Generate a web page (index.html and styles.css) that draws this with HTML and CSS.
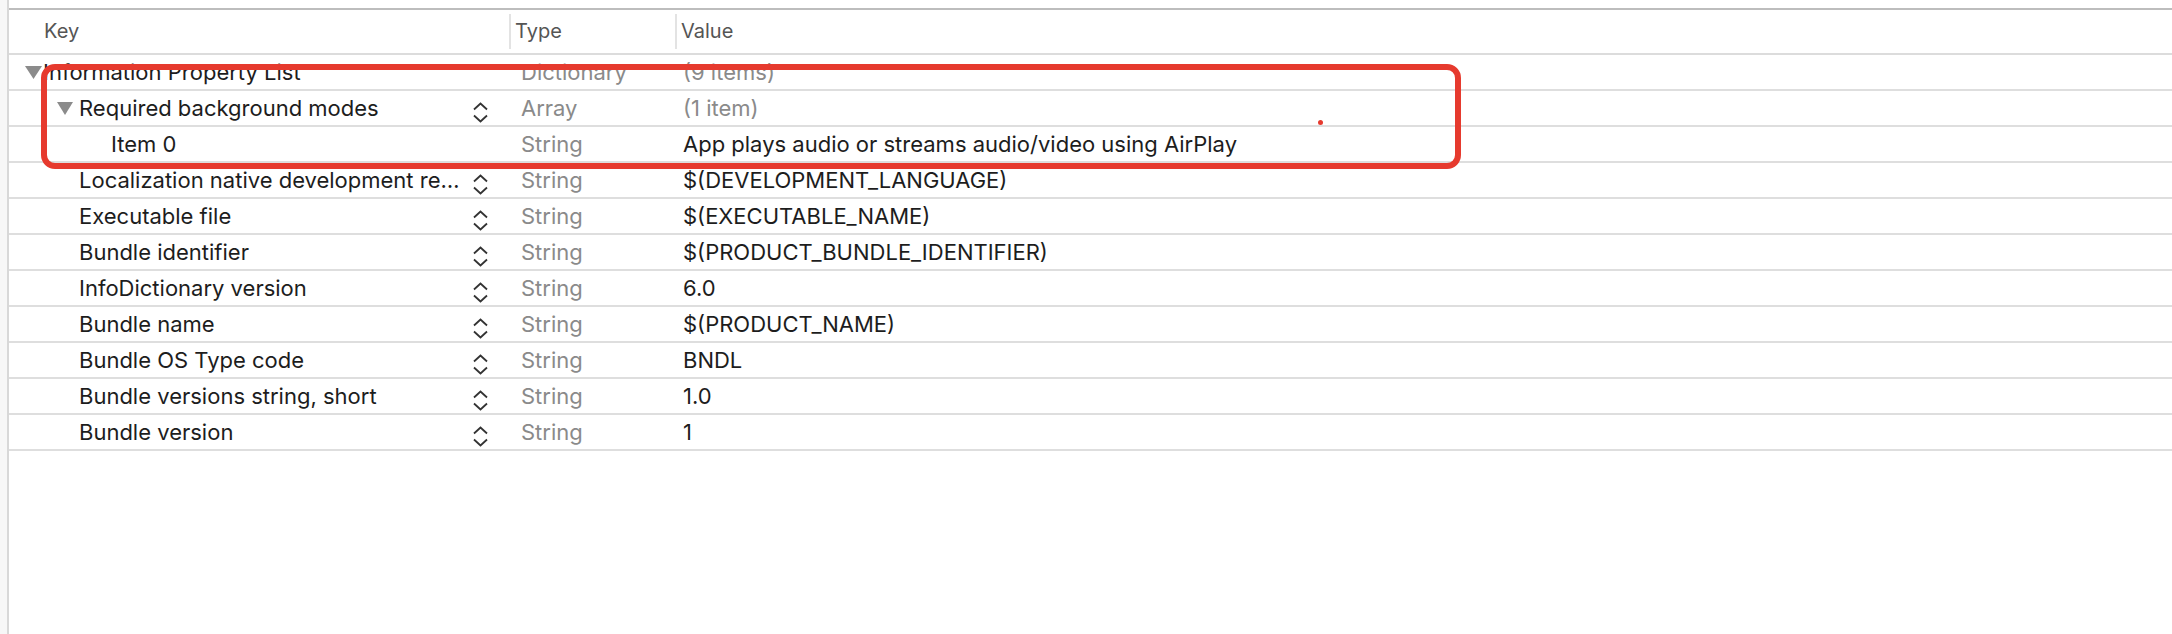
FILE: index.html
```html
<!DOCTYPE html>
<html lang="en">
<head>
<meta charset="utf-8">
<title>Info.plist</title>
<link rel="stylesheet" href="styles.css">
</head>
<body>
<div class="page">
  <div class="gutter"></div>
  <div class="main">
    <div class="header">
      <div class="hcell hkey">Key</div>
      <div class="hcell hdiv">Type</div>
      <div class="hcell hdiv">Value</div>
    </div>

    <div class="row">
      <div class="key lvl0">
        <svg class="tri" width="17" height="13" viewBox="0 0 17 13"><polygon points="0,0 17,0 8.5,13"/></svg>
        <span class="ktext">Information Property List</span>
      </div>
      <div class="type">Dictionary</div>
      <div class="value dim">(9 items)</div>
    </div>

    <div class="row">
      <div class="key lvl1">
        <svg class="tri" width="16" height="13" viewBox="0 0 16 13"><polygon points="0,0 16,0 8,13"/></svg>
        <span class="ktext">Required background modes</span>
        <svg class="step" width="15" height="21" viewBox="0 0 15 21"><path d="M1 7.5 L7.5 1.5 L14 7.5 M1 13.5 L7.5 19.5 L14 13.5"/></svg>
      </div>
      <div class="type">Array</div>
      <div class="value dim">(1 item)</div>
    </div>

    <div class="row">
      <div class="key lvl2">
        <span class="ktext">Item 0</span>
      </div>
      <div class="type">String</div>
      <div class="value">App plays audio or streams audio/video using AirPlay</div>
    </div>

    <div class="row">
      <div class="key lvl1n">
        <span class="ktext">Localization native development re…</span>
        <svg class="step" width="15" height="21" viewBox="0 0 15 21"><path d="M1 7.5 L7.5 1.5 L14 7.5 M1 13.5 L7.5 19.5 L14 13.5"/></svg>
      </div>
      <div class="type">String</div>
      <div class="value">$(DEVELOPMENT_LANGUAGE)</div>
    </div>

    <div class="row">
      <div class="key lvl1n">
        <span class="ktext">Executable file</span>
        <svg class="step" width="15" height="21" viewBox="0 0 15 21"><path d="M1 7.5 L7.5 1.5 L14 7.5 M1 13.5 L7.5 19.5 L14 13.5"/></svg>
      </div>
      <div class="type">String</div>
      <div class="value">$(EXECUTABLE_NAME)</div>
    </div>

    <div class="row">
      <div class="key lvl1n">
        <span class="ktext">Bundle identifier</span>
        <svg class="step" width="15" height="21" viewBox="0 0 15 21"><path d="M1 7.5 L7.5 1.5 L14 7.5 M1 13.5 L7.5 19.5 L14 13.5"/></svg>
      </div>
      <div class="type">String</div>
      <div class="value">$(PRODUCT_BUNDLE_IDENTIFIER)</div>
    </div>

    <div class="row">
      <div class="key lvl1n">
        <span class="ktext">InfoDictionary version</span>
        <svg class="step" width="15" height="21" viewBox="0 0 15 21"><path d="M1 7.5 L7.5 1.5 L14 7.5 M1 13.5 L7.5 19.5 L14 13.5"/></svg>
      </div>
      <div class="type">String</div>
      <div class="value">6.0</div>
    </div>

    <div class="row">
      <div class="key lvl1n">
        <span class="ktext">Bundle name</span>
        <svg class="step" width="15" height="21" viewBox="0 0 15 21"><path d="M1 7.5 L7.5 1.5 L14 7.5 M1 13.5 L7.5 19.5 L14 13.5"/></svg>
      </div>
      <div class="type">String</div>
      <div class="value">$(PRODUCT_NAME)</div>
    </div>

    <div class="row">
      <div class="key lvl1n">
        <span class="ktext">Bundle OS Type code</span>
        <svg class="step" width="15" height="21" viewBox="0 0 15 21"><path d="M1 7.5 L7.5 1.5 L14 7.5 M1 13.5 L7.5 19.5 L14 13.5"/></svg>
      </div>
      <div class="type">String</div>
      <div class="value">BNDL</div>
    </div>

    <div class="row">
      <div class="key lvl1n">
        <span class="ktext">Bundle versions string, short</span>
        <svg class="step" width="15" height="21" viewBox="0 0 15 21"><path d="M1 7.5 L7.5 1.5 L14 7.5 M1 13.5 L7.5 19.5 L14 13.5"/></svg>
      </div>
      <div class="type">String</div>
      <div class="value">1.0</div>
    </div>

    <div class="row">
      <div class="key lvl1n">
        <span class="ktext">Bundle version</span>
        <svg class="step" width="15" height="21" viewBox="0 0 15 21"><path d="M1 7.5 L7.5 1.5 L14 7.5 M1 13.5 L7.5 19.5 L14 13.5"/></svg>
      </div>
      <div class="type">String</div>
      <div class="value">1</div>
    </div>
  </div>

  <div class="highlight"></div>
  <div class="dot"></div>
</div>
</body>
</html>
```

FILE: styles.css
```css
* { box-sizing: border-box; }

html, body {
  margin: 0;
  padding: 0;
  background: #ffffff;
}

body {
  font-family: Inter, "Liberation Sans", sans-serif;
  color: #1d1d1d;
}

.page {
  position: relative;
  display: flex;
  width: 2172px;
  height: 634px;
  overflow: hidden;
  background: #ffffff;
}

.gutter {
  width: 7px;
  flex: none;
  background: #f7f7f7;
}

.main {
  flex: 1;
  border-left: 2px solid #d8d8d8;
  padding-top: 8px;
}

.header {
  display: grid;
  grid-template-columns: 500px 166px 1fr;
  height: 47px;
  border-top: 2px solid #bdbdbd;
  border-bottom: 2px solid #dcdcdc;
}

.hcell {
  display: flex;
  align-items: center;
  font-size: 20px;
  color: #555555;
  padding-bottom: 1px;
}

.hkey {
  padding-left: 35px;
}

.hdiv::before {
  content: "";
  width: 2px;
  height: 35px;
  margin-right: 4px;
  background: #e3e3e3;
}

.row {
  display: grid;
  grid-template-columns: 500px 166px 1fr;
  height: 36px;
  border-bottom: 2px solid #dedede;
  font-size: 22px;
}

.key {
  display: flex;
  align-items: center;
  white-space: nowrap;
  padding-right: 21px;
}

.lvl0 { padding-left: 16px; }
.lvl0 .tri { margin-right: 1px; }
.lvl1 { padding-left: 48px; }
.lvl1 .tri { margin-right: 6px; }
.lvl1n { padding-left: 70px; }
.lvl2 { padding-left: 102px; }

.tri {
  flex: none;
  fill: #8b8b8b;
}

.ktext {
  color: #1d1d1d;
}

.step {
  flex: none;
  margin-left: auto;
  margin-top: 8px;
  fill: none;
  stroke: #333333;
  stroke-width: 1.8;
}

.type {
  display: flex;
  align-items: center;
  padding-left: 12px;
  color: #8a8a8a;
}

.value {
  display: flex;
  align-items: center;
  padding-left: 8px;
  color: #1d1d1d;
  white-space: nowrap;
}

.value.dim {
  color: #8a8a8a;
}

.highlight {
  position: absolute;
  left: 41px;
  top: 64px;
  width: 1420px;
  height: 105px;
  border: 6px solid #e63a2e;
  border-radius: 14px;
}

.dot {
  position: absolute;
  left: 1318px;
  top: 120px;
  width: 5px;
  height: 5px;
  border-radius: 50%;
  background: #e63a2e;
}
```
